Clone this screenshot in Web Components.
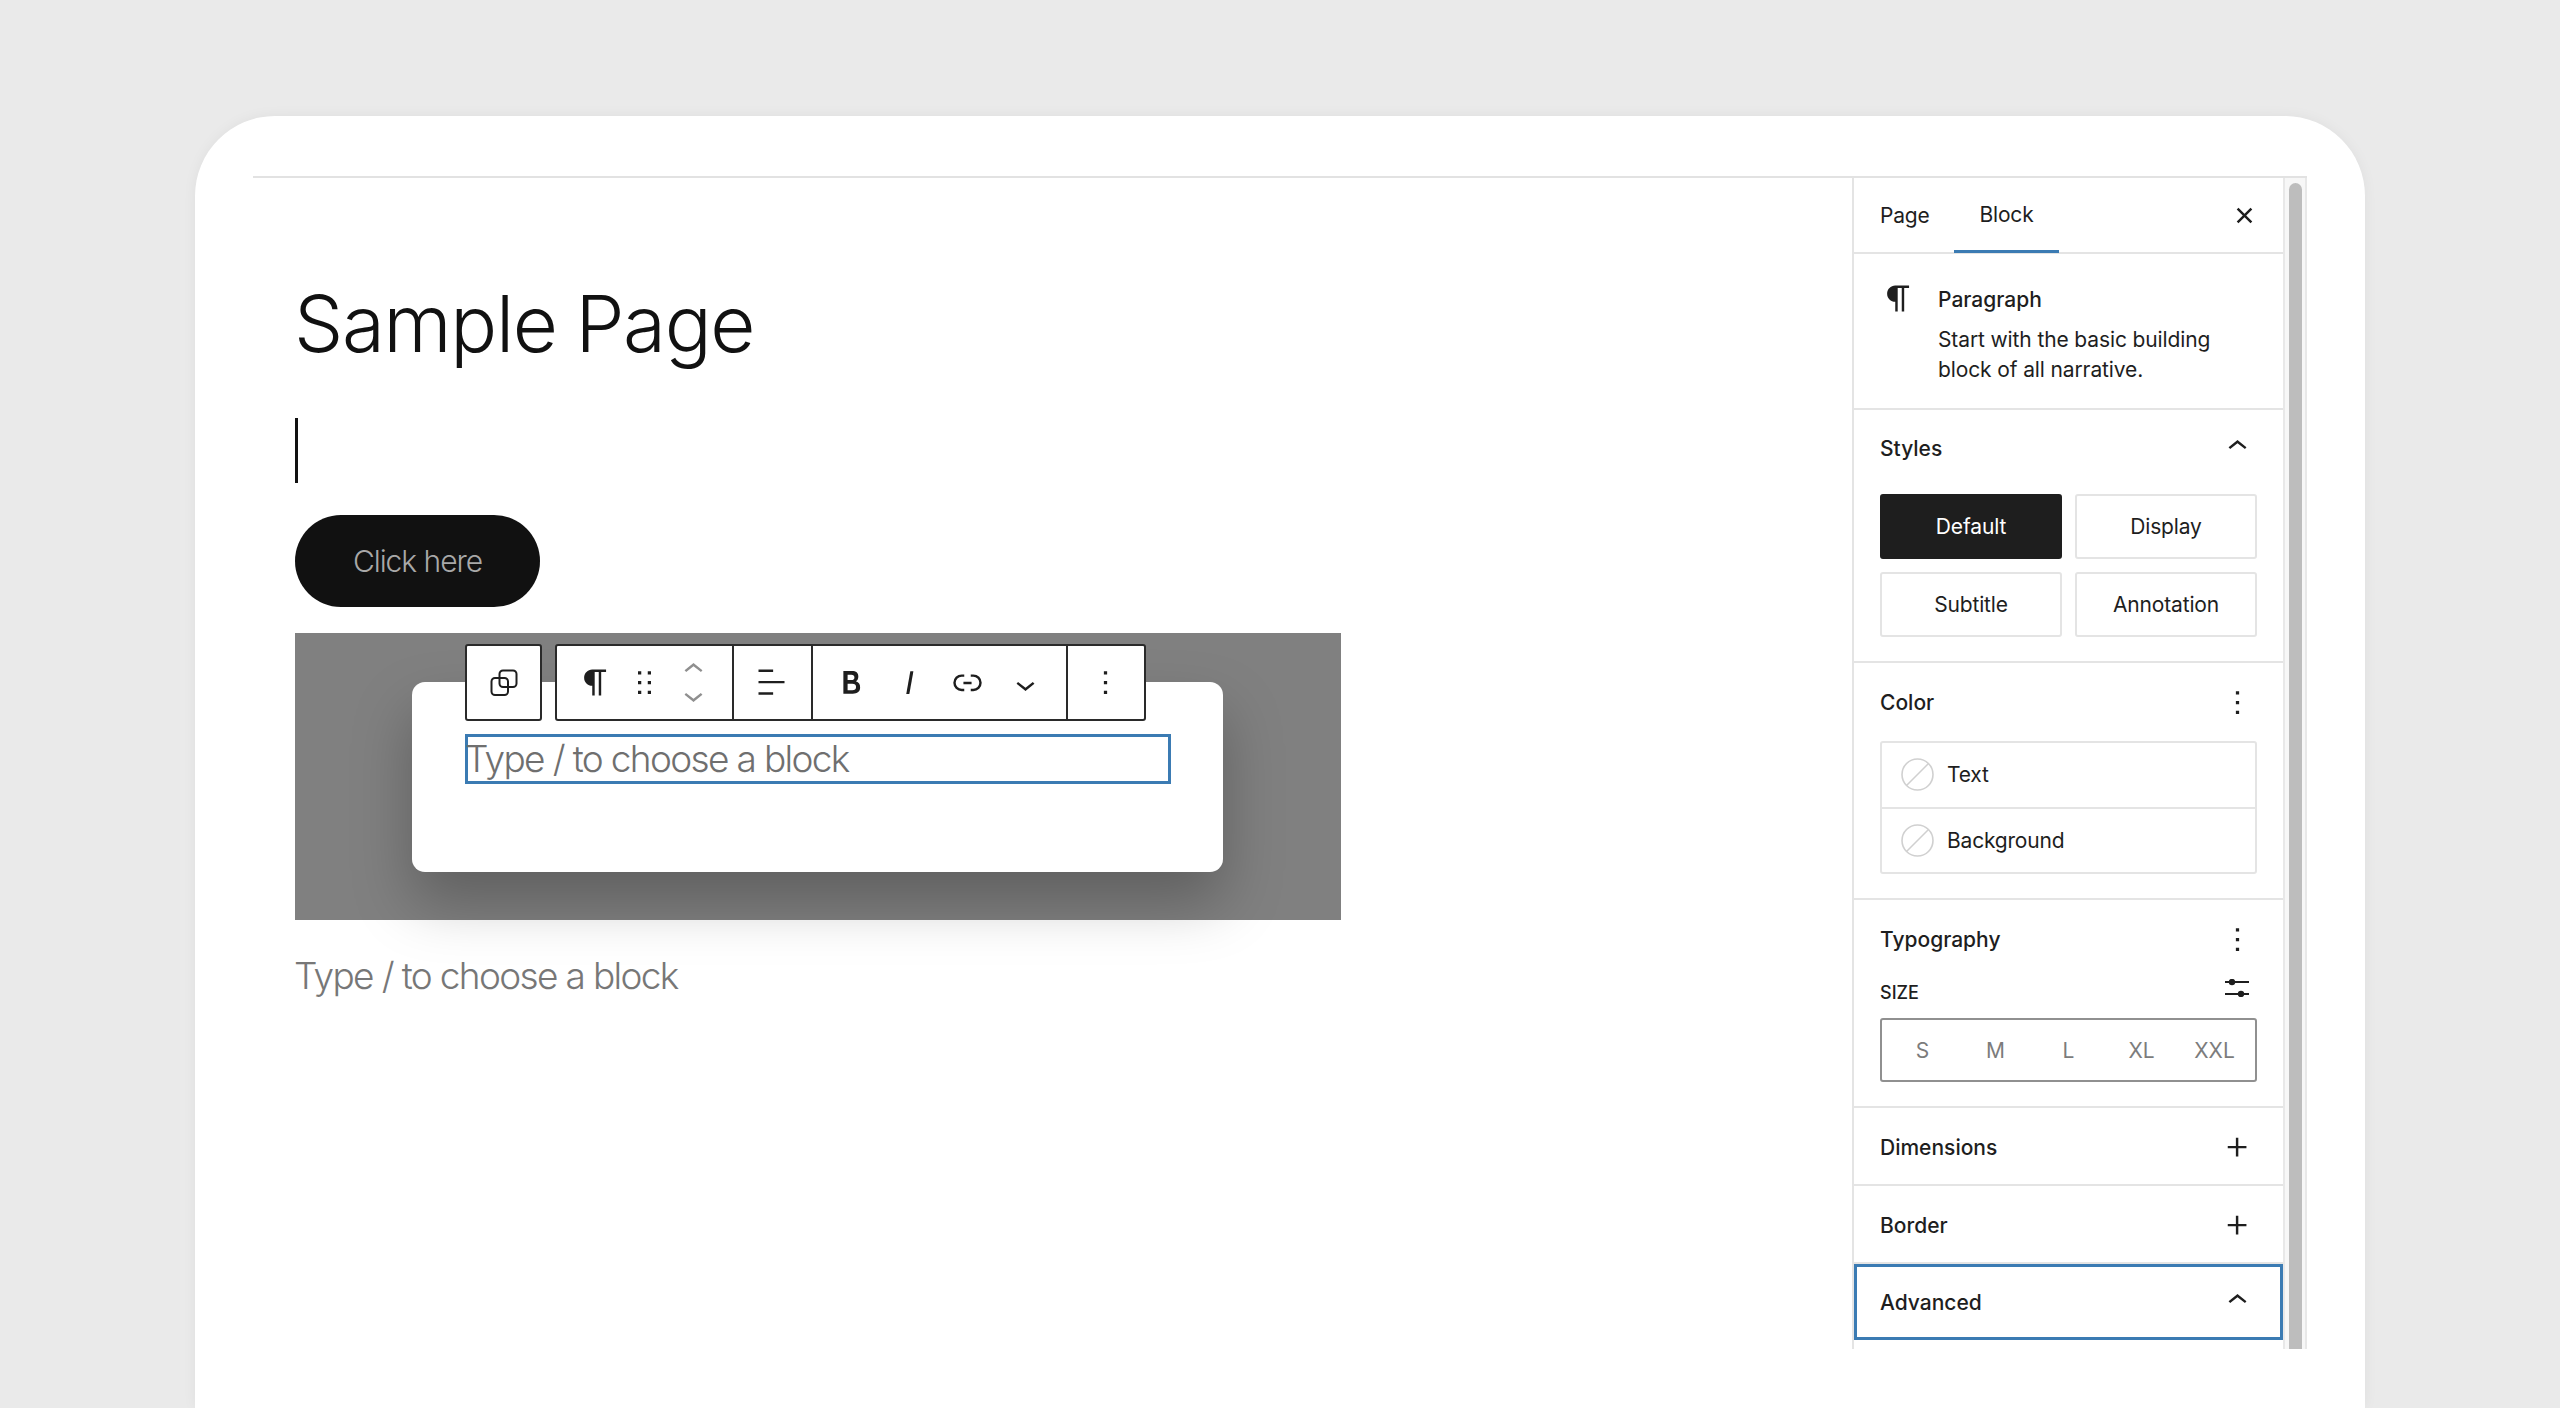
<!DOCTYPE html>
<html lang="en">
<head>
<meta charset="utf-8">
<title>Sample Page</title>
<style>
  html, body { margin: 0; padding: 0; height: 100%; overflow: hidden; background: #eaeaea; }
  body { font-family: Inter, "Liberation Sans", sans-serif; color: #1e1e1e; }
</style>
</head>
<body>
<app-frame>
  <editor-canvas slot="canvas"></editor-canvas>
  <editor-sidebar slot="sidebar"></editor-sidebar>
</app-frame>
<script>
const ICONS = {
  pilcrow: 'm9.99609 14v-.2251l.00391.0001v6.225h1.5v-14.5h2.5v14.5h1.5v-14.5h3v-1.5h-8.50391c-2.76142 0-5 2.23858-5 5 0 2.7614 2.23858 5 5 5z',
  drag: 'M8 7h2V5H8v2zm0 6h2v-2H8v2zm0 6h2v-2H8v2zm6-14v2h2V5h-2zm0 8h2v-2h-2v2zm0 6h2v-2h-2v2z',
  up: 'M6.5 12.4L12 8l5.5 4.4-.9 1.2L12 10l-4.5 3.6-1-1.2z',
  down: 'M17.5 11.6L12 16l-5.5-4.4.9-1.2L12 14l4.5-3.6 1 1.2z',
  align: 'M13 5.5H4V4h9v1.5Zm7 7H4V11h16v1.5Zm-7 7H4V18h9v1.5Z',
  bold: 'M14.7 11.3c1-.6 1.5-1.6 1.5-3 0-2.3-1.3-3.4-4-3.4H7v14h5.8c1.4 0 2.5-.3 3.3-1 .8-.7 1.2-1.7 1.2-2.9.1-1.9-.8-3.1-2.6-3.7zm-5.1-4h2.3c.6 0 1.1.1 1.4.4.3.3.5.7.5 1.2s-.2 1-.5 1.2c-.3.3-.8.4-1.4.4H9.6V7.3zm4.6 9c-.4.3-1 .4-1.7.4H9.6v-3.9h2.9c.7 0 1.3.2 1.7.5.4.3.6.8.6 1.5s-.2 1.2-.6 1.5z',
  italic: 'M12.5 5L10 19h1.9l2.5-14z',
  link: 'M10 17.389H8.444A5.194 5.194 0 1 1 8.444 7H10v1.5H8.444a3.694 3.694 0 0 0 0 7.389H10v1.5ZM14 7h1.556a5.194 5.194 0 0 1 0 10.39H14v-1.5h1.556a3.694 3.694 0 0 0 0-7.39H14V7Zm-4.5 6h5v-1.5h-5V13Z',
  more: 'M13 19h-2v-2h2v2zm0-6h-2v-2h2v2zm0-6h-2V5h2v2z',
  close: 'M12 13.06l3.712 3.713 1.061-1.06L13.061 12l3.712-3.712-1.06-1.06L12 10.938 8.288 7.227l-1.061 1.06L10.939 12l-3.712 3.712 1.06 1.061L12 13.061z',
  plus: 'M11 12.5V17.5H12.5V12.5H17.5V11H12.5V6H11V11H6V12.5H11Z'
};
const svgIcon = (name, size = 39, color = '#1e1e1e') =>
  `<svg width="${size}" height="${size}" viewBox="0 0 24 24" fill="${color}" aria-hidden="true" style="display:block"><path d="${ICONS[name]}"/></svg>`;

class ShadowBase extends HTMLElement {
  constructor() { super(); this.attachShadow({ mode: 'open' }); }
  render(html) { this.shadowRoot.innerHTML = html; }
}

class AppFrame extends ShadowBase {
  connectedCallback() {
    this.render(`<style>
      :host { display: block; box-sizing: border-box; margin: 116px 0 0 195px; width: 2170px; height: 1292px;
        padding: 60px 58px 0; background: #fff; border-radius: 80px 80px 0 0; box-shadow: 0 0 14px rgba(0,0,0,.05); }
      .editor { display: flex; height: 1173px; border-top: 2px solid #e2e2e2; box-sizing: border-box; }
      ::slotted([slot=canvas]) { flex: 1 1 auto; min-width: 0; }
      ::slotted([slot=sidebar]) { flex: 0 0 455px; }
    </style>
    <div class="editor"><slot name="canvas"></slot><slot name="sidebar"></slot></div>`);
  }
}

class BlockToolbar extends ShadowBase {
  connectedCallback() {
    this.render(`<style>
      :host { display: flex; gap: 13px; height: 77px; }
      .group { display: flex; box-sizing: border-box; height: 77px; background: #fff; border: 2px solid #2a2a2a; border-radius: 3px; }
      .sec { display: flex; align-items: center; height: 100%; box-sizing: border-box; }
      .sec + .sec { border-left: 2px solid #2a2a2a; }
      .swap { width: 73px; justify-content: center; }
      .s1 { width: 175px; padding-left: 19px; }
      .s2 { width: 79px; padding-left: 18px; }
      .s3 { width: 255px; padding-left: 19px; }
      .s4 { flex: 1; width: 78px; padding-left: 18px; }
      .mover { display: flex; flex-direction: column; margin-left: 10px; }
      .mover svg:first-child { margin-bottom: -13px; }
      .gap2 { margin-left: 10px; }
      .ib { width: 39px; height: 39px; flex: none; }
      .s3 .ib + .ib { margin-left: 19px; }
      .chev { margin-top: 3px; }
    </style>
    <div class="group"><div class="sec swap">
      <svg width="28" height="28" viewBox="0 0 28 28" fill="none" stroke="#1e1e1e" stroke-width="2" aria-hidden="true">
        <rect x="1.5" y="9" width="16.5" height="17" rx="3.5"/><rect x="9.5" y="1.5" width="17" height="16.5" rx="3.5"/>
      </svg></div></div>
    <div class="group">
      <div class="sec s1">
        <span class="ib">${svgIcon('pilcrow')}</span>
        <span class="ib gap2">${svgIcon('drag')}</span>
        <span class="mover">${svgIcon('up', 39, '#8f8f8f')}${svgIcon('down', 39, '#8f8f8f')}</span>
      </div>
      <div class="sec s2"><span class="ib">${svgIcon('align')}</span></div>
      <div class="sec s3">
        <span class="ib">${svgIcon('bold')}</span><span class="ib">${svgIcon('italic')}</span>
        <span class="ib">${svgIcon('link')}</span><span class="ib chev">${svgIcon('down')}</span>
      </div>
      <div class="sec s4"><span class="ib">${svgIcon('more')}</span></div>
    </div>`);
  }
}

class EditorCanvas extends ShadowBase {
  connectedCallback() {
    this.render(`<style>
      :host { display: block; box-sizing: border-box; padding: 102px 0 0 42px; font-family: Inter, "Liberation Sans", sans-serif; color: #111; }
      h1 { margin: 0 0 0 -1px; font-size: 78px; line-height: 88px; font-weight: 350; letter-spacing: -1.3px; word-spacing: -2px; }
      .caret { width: 3px; height: 65px; margin-top: 50px; background: #111; }
      .cta { display: flex; align-items: center; justify-content: center; width: 245px; height: 92px; margin-top: 32px;
        background: #111; color: #a8a8a8; border-radius: 46px; font-size: 30px; font-weight: 300; letter-spacing: -1.05px; }
      .group { position: relative; box-sizing: border-box; width: 1046px; height: 287px; margin-top: 26px; padding: 49px 0 0 117px; background: #808080; }
      .inner { box-sizing: border-box; width: 811px; height: 190px; padding: 52px 0 0 53px; background: #fff; border-radius: 13px;
        box-shadow: 0 30px 60px rgba(0,0,0,.26); }
      .input { box-sizing: border-box; width: 706px; height: 50px; border: 3px solid #3b7bb3; }
      .ph { margin-left: -3px; font-size: 37px; line-height: 44px; font-weight: 300; color: #6f6f6f; letter-spacing: -1.65px; white-space: nowrap; }
      block-toolbar { position: absolute; left: 170px; top: 11px; }
      .next { margin: 31px 0 0 -1px; color: #777; line-height: 50px; }
    </style>
    <h1>Sample Page</h1>
    <div class="caret"></div>
    <div class="cta">Click here</div>
    <div class="group">
      <div class="inner"><div class="input"><div class="ph">Type / to choose a block</div></div></div>
      <block-toolbar></block-toolbar>
    </div>
    <div class="ph next">Type / to choose a block</div>`);
  }
}

class SidePanel extends ShadowBase {
  connectedCallback() {
    const icon = this.getAttribute('icon');
    const focus = this.hasAttribute('focused');
    const flush = icon === 'plus';
    const nudge = this.getAttribute('nudge') || 0;
    this.render(`<style>
      :host { display: block; border-bottom: ${focus ? '0' : '2px solid #e4e4e4'}; }
      header { display: flex; align-items: center; justify-content: space-between; height: 76px; padding: 0 26px; box-sizing: border-box;
        font-size: 21px; font-weight: 500; color: #1e1e1e; ${focus ? 'box-shadow: inset 0 0 0 3px #3b7bb3;' : ''} }
      .lab { padding-top: ${nudge}px; }
      .ico { ${icon === 'up' ? 'margin-top:-3px;' : `padding-top:${nudge}px;`} }
      .body { padding: 0 26px 24px; }
      ${flush || focus ? '.body { display: none; }' : ''}
    </style>
    <header><span class="lab">${this.getAttribute('label')}</span><span class="ico">${svgIcon(icon)}</span></header>
    <div class="body"><slot></slot></div>`);
  }
}

class StyleButtons extends ShadowBase {
  connectedCallback() {
    this.render(`<style>
      :host { display: grid; grid-template-columns: 182px 182px; gap: 13px; margin-top: 8px; }
      div { display: flex; align-items: center; justify-content: center; height: 65px; box-sizing: border-box;
        border: 2px solid #e4e4e4; border-radius: 3px; font-size: 21px; letter-spacing: -.15px; color: #1e1e1e; }
      .on { background: #1e1e1e; border-color: #1e1e1e; color: #fff; }
    </style>
    <div class="on">Default</div><div>Display</div><div>Subtitle</div><div>Annotation</div>`);
  }
}

class ColorList extends ShadowBase {
  connectedCallback() {
    const swatch = `<svg width="33" height="33" viewBox="0 0 33 33" fill="none" stroke="#d0d0d0" stroke-width="1.6" aria-hidden="true"><circle cx="16.5" cy="16.5" r="15.5"/><path d="M5.5 27.5 27.5 5.5"/></svg>`;
    this.render(`<style>
      :host { display: block; box-sizing: border-box; border: 2px solid #e4e4e4; border-radius: 3px; margin-top: 2px; }
      div { display: flex; align-items: center; gap: 13px; height: 63.5px; padding-left: 19px; font-size: 21px; letter-spacing: -.2px; color: #1e1e1e; }
      div + div { height: 65.5px; padding-top: 1px; border-top: 2px solid #e4e4e4; box-sizing: border-box; }
    </style>
    <div>${swatch}<span>Text</span></div><div>${swatch}<span>Background</span></div>`);
  }
}

class SizeControl extends ShadowBase {
  connectedCallback() {
    this.render(`<style>
      :host { display: block; }
      .row { display: flex; align-items: center; justify-content: space-between; height: 32px; margin-bottom: 10px; }
      .lab { font-size: 18px; font-weight: 500; color: #1e1e1e; text-transform: uppercase; }
      svg { display: block; margin: -8px 8px 0 0; }
      .seg { display: grid; grid-template-columns: repeat(5, 73px); box-sizing: border-box; height: 64px; padding: 0 4px; align-items: center;
        border: 2px solid #909090; border-radius: 3px; font-size: 21px; color: #7c7c7c; text-align: center; }
    </style>
    <div class="row"><span class="lab">Size</span>
      <svg width="24" height="18" viewBox="0 0 24 18" aria-hidden="true"><path d="M0 3h24M0 15h24" stroke="#1e1e1e" stroke-width="2"/><circle cx="7" cy="3" r="3.2" fill="#1e1e1e"/><circle cx="16" cy="15" r="3.2" fill="#1e1e1e"/></svg>
    </div>
    <div class="seg"><span>S</span><span>M</span><span>L</span><span>XL</span><span>XXL</span></div>`);
  }
}

class EditorSidebar extends ShadowBase {
  connectedCallback() {
    this.render(`<style>
      :host { display: flex; box-sizing: border-box; height: 100%; border-left: 2px solid #e4e4e4; font-family: Inter, "Liberation Sans", sans-serif; color: #1e1e1e; overflow: hidden; }
      .col { flex: 0 0 429px; width: 429px; min-width: 0; }
      .track { flex: 1; box-sizing: border-box; padding: 5px 3px 0 4px; background: #f7f7f7; border-left: 2px solid #e8e8e8; border-right: 2px solid #e8e8e8; }
      .thumb { height: 100%; background: #bdbdbd; border-radius: 7px 7px 0 0; }
      .tabs { display: flex; align-items: center; height: 76px; box-sizing: border-box; border-bottom: 2px solid #e4e4e4; font-size: 21px; letter-spacing: -.2px; }
      .tab { display: flex; align-items: center; width: 100px; height: 76px; padding: 0 0 0 26px; box-sizing: border-box; }
      .tab.on { border-bottom: 3px solid #3b7bb3; padding: 1px 0 0; width: 105px; justify-content: center; }
      .x { margin-left: auto; margin-right: 19px; }
      .info { display: flex; gap: 20px; height: 156px; padding: 25px 26px 0; box-sizing: border-box; border-bottom: 2px solid #e4e4e4; }
      .info .i { margin-left: -1px; }
      .info b { display: block; font-weight: 500; font-size: 21px; line-height: 41px; }
      .info p { margin: 5px 0 0; font-size: 21px; line-height: 30px; letter-spacing: -.12px; }
    </style>
    <div class="col">
      <div class="tabs"><div class="tab">Page</div><div class="tab on">Block</div><div class="x">${svgIcon('close')}</div></div>
      <div class="info"><div class="i">${svgIcon('pilcrow')}</div><div class="t"><b>Paragraph</b><p>Start with the basic building<br>block of all narrative.</p></div></div>
      <side-panel label="Styles" icon="up"><style-buttons></style-buttons></side-panel>
      <side-panel label="Color" icon="more" nudge="2"><color-list></color-list></side-panel>
      <side-panel label="Typography" icon="more" nudge="3"><size-control></size-control></side-panel>
      <side-panel label="Dimensions" icon="plus" nudge="2"></side-panel>
      <side-panel label="Border" icon="plus" nudge="2"></side-panel>
      <side-panel label="Advanced" icon="up" focused></side-panel>
    </div>
    <div class="track"><div class="thumb"></div></div>`);
  }
}

customElements.define('app-frame', AppFrame);
customElements.define('block-toolbar', BlockToolbar);
customElements.define('editor-canvas', EditorCanvas);
customElements.define('side-panel', SidePanel);
customElements.define('style-buttons', StyleButtons);
customElements.define('color-list', ColorList);
customElements.define('size-control', SizeControl);
customElements.define('editor-sidebar', EditorSidebar);
</script>
</body>
</html>
